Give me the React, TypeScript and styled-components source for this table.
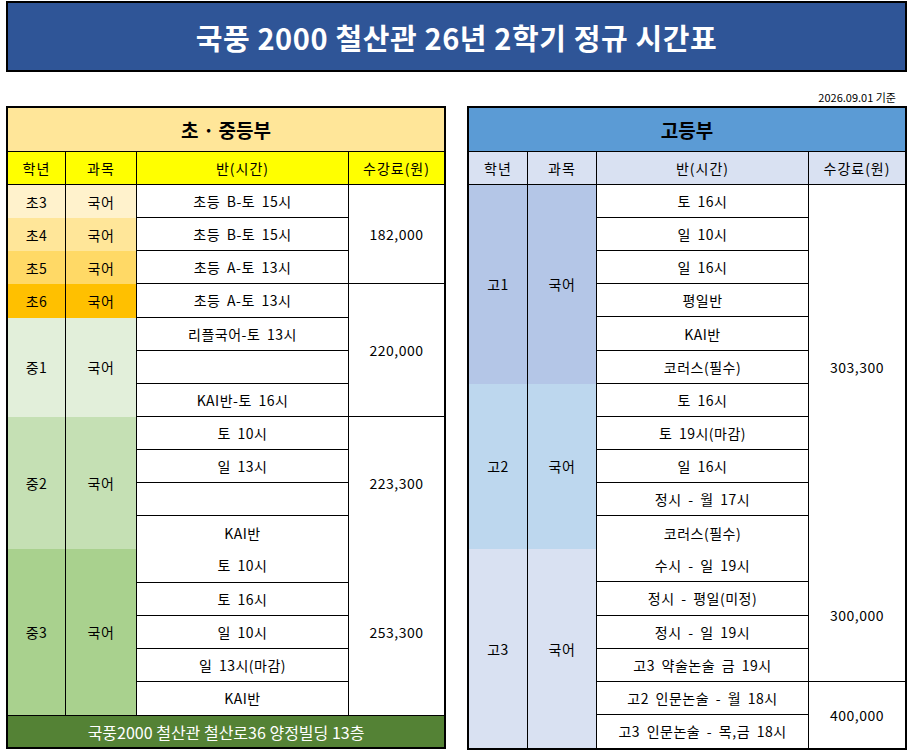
import React from 'react';
import styled, { createGlobalStyle } from 'styled-components';

const Global = createGlobalStyle`
  html, body { margin: 0; padding: 0; background: #ffffff; }
  body { font-family: "Noto Sans CJK KR", "Noto Sans", sans-serif; color: #000; }
  * { box-sizing: border-box; }
`;

const Page = styled.div`
  width: 908px;
  height: 752px;
  padding: 1px 1px 0 6px;
  display: flex;
  flex-direction: column;
`;

const TitleBox = styled.div`
  height: 71px;
  border: 2px solid #000;
  background: #2f5597;
  display: flex;
  align-items: center;
  justify-content: center;
  color: #fff;
  font-weight: 700;
  font-size: 29px;
  letter-spacing: 0.6px;
`;

const DateLine = styled.div`
  height: 34px;
  display: flex;
  align-items: flex-end;
  justify-content: flex-end;
  padding: 0 11px 2px 0;
  font-size: 11px;
  line-height: 14px;
`;

const Tables = styled.div`
  display: flex;
  align-items: flex-start;
  justify-content: space-between;
`;

const Table = styled.div<{ $cols: string; $rows: string; $height: number }>`
  width: 440px;
  height: ${(p) => p.$height}px;
  border: 2px solid #000;
  display: grid;
  grid-template-columns: ${(p) => p.$cols};
  grid-template-rows: ${(p) => p.$rows};
`;

const SectionTitle = styled.div<{ $bg: string }>`
  grid-column: 1 / -1;
  background: ${(p) => p.$bg};
  border-bottom: 1px solid #000;
  display: flex;
  align-items: center;
  justify-content: center;
  font-size: 19px;
  font-weight: 700;
`;

const HeadCell = styled.div<{ $bg: string; $last?: boolean }>`
  background: ${(p) => p.$bg};
  border-bottom: 1px solid #000;
  border-right: ${(p) => (p.$last ? 'none' : '1px solid #000')};
  display: flex;
  align-items: center;
  justify-content: center;
  font-size: 14px;
  letter-spacing: 1px;
`;

const Cell = styled.div<{
  $bg?: string;
  $col: number;
  $row: number;
  $span: number;
  $right?: boolean;
  $bottom?: boolean;
}>`
  grid-column: ${(p) => p.$col};
  grid-row: ${(p) => `${p.$row} / span ${p.$span}`};
  background: ${(p) => p.$bg || '#ffffff'};
  border-right: ${(p) => (p.$right ? '1px solid #000' : 'none')};
  border-bottom: ${(p) => (p.$bottom ? '1px solid #000' : 'none')};
  display: flex;
  align-items: center;
  justify-content: center;
  font-size: 14px;
  letter-spacing: 0.5px;
  word-spacing: 3px;
  white-space: pre;
`;

const Footer = styled.div`
  grid-column: 1 / -1;
  background: #548235;
  border-top: 1px solid #000;
  color: #fff;
  display: flex;
  align-items: center;
  justify-content: center;
  font-size: 16px;
`;

type Group = { label: string; span: number; bg: string };
type Price = { value: string; span: number; line: boolean };
type Section = {
  title: string;
  titleBg: string;
  headBg: string;
  cols: string;
  groups: Group[];
  classes: string[];
  noLine: number[];
  prices: Price[];
  footer?: string;
};

const leftSection: Section = {
  title: '초 · 중등부',
  titleBg: '#ffe699',
  headBg: '#ffff00',
  cols: '58px 71px 212px 1fr',
  groups: [
    { label: '초3', span: 1, bg: '#fff2cc' },
    { label: '초4', span: 1, bg: '#ffe699' },
    { label: '초5', span: 1, bg: '#ffd966' },
    { label: '초6', span: 1, bg: '#ffc000' },
    { label: '중1', span: 3, bg: '#e2efda' },
    { label: '중2', span: 4, bg: '#c5e0b4' },
    { label: '중3', span: 5, bg: '#a9d18e' },
  ],
  classes: [
    '초등 B-토 15시',
    '초등 B-토 15시',
    '초등 A-토 13시',
    '초등 A-토 13시',
    '리플국어-토 13시',
    '',
    'KAI반-토 16시',
    '토 10시',
    '일 13시',
    '',
    'KAI반',
    '토 10시',
    '토 16시',
    '일 10시',
    '일 13시(마감)',
    'KAI반',
  ],
  noLine: [10, 15],
  prices: [
    { value: '182,000', span: 3, line: true },
    { value: '220,000', span: 4, line: true },
    { value: '223,300', span: 4, line: false },
    { value: '253,300', span: 5, line: false },
  ],
  footer: '국풍2000 철산관 철산로36 양정빌딩 13층',
};

const rightSection: Section = {
  title: '고등부',
  titleBg: '#5b9bd5',
  headBg: '#d9e1f2',
  cols: '59px 69px 212px 1fr',
  groups: [
    { label: '고1', span: 6, bg: '#b4c6e7' },
    { label: '고2', span: 5, bg: '#bdd7ee' },
    { label: '고3', span: 6, bg: '#d9e1f2' },
  ],
  classes: [
    '토 16시',
    '일 10시',
    '일 16시',
    '평일반',
    'KAI반',
    '코러스(필수)',
    '토 16시',
    '토 19시(마감)',
    '일 16시',
    '정시 - 월 17시',
    '코러스(필수)',
    '수시 - 일 19시',
    '정시 - 평일(미정)',
    '정시 - 일 19시',
    '고3 약술논술 금 19시',
    '고2 인문논술 - 월 18시',
    '고3 인문논술 - 목,금 18시',
  ],
  noLine: [10, 16],
  prices: [
    { value: '303,300', span: 11, line: false },
    { value: '300,000', span: 4, line: true },
    { value: '400,000', span: 2, line: false },
  ],
};

const headers = ['학년', '과목', '반(시간)', '수강료(원)'];

function Timetable({ s }: { s: Section }) {
  const n = s.classes.length;
  const rows = `44px 33px repeat(${n}, 1fr)${s.footer ? ' 32px' : ''}`;
  const first = 3;
  let gRow = first;
  let pRow = first;
  return (
    <Table $cols={s.cols} $rows={rows} $height={s.footer ? 643 : 644}>
      <SectionTitle $bg={s.titleBg}>{s.title}</SectionTitle>
      {headers.map((h, i) => (
        <HeadCell key={h} $bg={s.headBg} $last={i === 3}>
          {h}
        </HeadCell>
      ))}
      {s.groups.map((g) => {
        const r = gRow;
        gRow += g.span;
        return (
          <React.Fragment key={g.label}>
            <Cell $col={1} $row={r} $span={g.span} $bg={g.bg} $right>
              {g.label}
            </Cell>
            <Cell $col={2} $row={r} $span={g.span} $bg={g.bg} $right>
              국어
            </Cell>
          </React.Fragment>
        );
      })}
      {s.classes.map((c, i) => (
        <Cell key={i} $col={3} $row={first + i} $span={1} $right $bottom={!s.noLine.includes(i)}>
          {c}
        </Cell>
      ))}
      {s.prices.map((p) => {
        const r = pRow;
        pRow += p.span;
        return (
          <Cell key={p.value} $col={4} $row={r} $span={p.span} $bottom={p.line}>
            {p.value}
          </Cell>
        );
      })}
      {s.footer && <Footer>{s.footer}</Footer>}
    </Table>
  );
}

export default function App() {
  return (
    <>
      <Global />
      <Page>
        <TitleBox>국풍 2000 철산관 26년 2학기 정규 시간표</TitleBox>
        <DateLine>2026.09.01 기준</DateLine>
        <Tables>
          <Timetable s={leftSection} />
          <Timetable s={rightSection} />
        </Tables>
      </Page>
    </>
  );
}
